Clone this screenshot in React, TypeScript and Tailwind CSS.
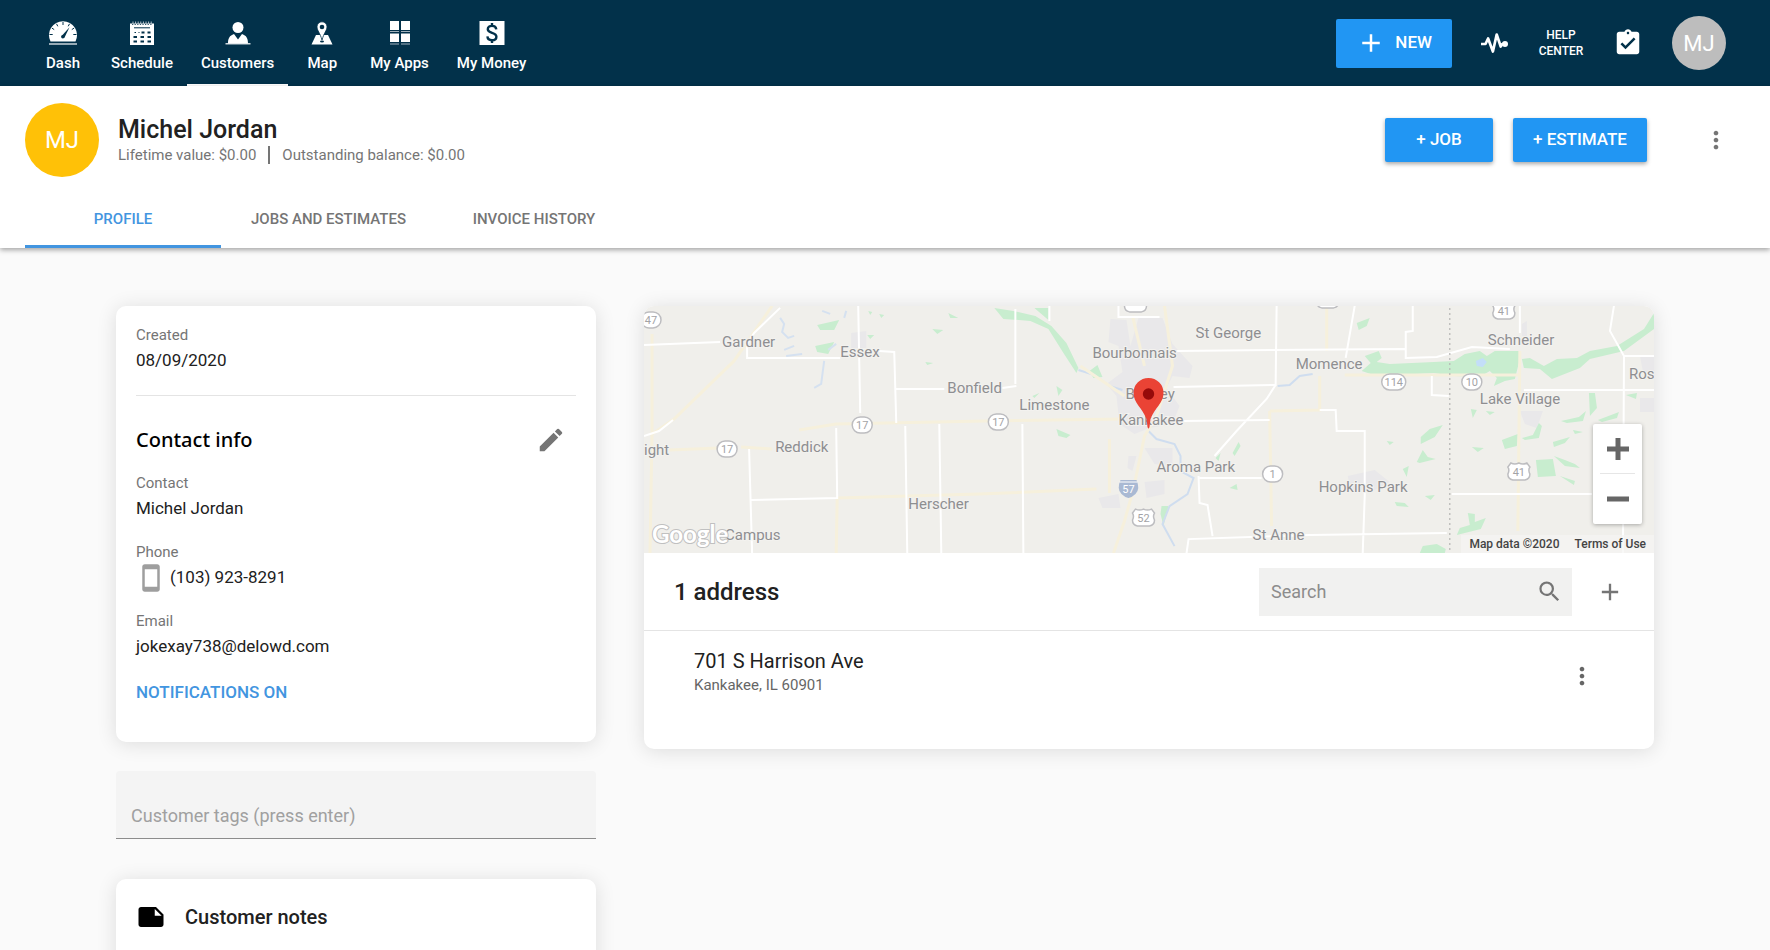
import type { ReactNode } from "react";
import {
  MdAdd,
  MdAssignmentTurnedIn,
  MdEdit,
  MdMoreVert,
  MdNote,
  MdSearch,
  MdStayCurrentPortrait,
} from "react-icons/md";

/* ===== Nav icons ===== */
const DashIcon = () => (
  <svg width="30" height="24" viewBox="0 0 30 24">
    <path d="M2.5 20.5A14 14 0 1 1 27.500 20.500Z" fill="#fff" />
    <path
      d="M15 1v3M8.500 2.800l1.300 2.500M21.500 2.800l-1.300 2.500M3.800 7l2.400 1.600M26.200 7l-2.400 1.600M1.500 13.500h3.200M28.500 13.500h-3.200"
      stroke="#02314a"
      strokeWidth="1"
    />
    <path d="M13.400 15.200L21.500 6.200L16.400 16.800Z" fill="#02314a" />
    <circle cx="14.800" cy="15.800" r="1.700" fill="#02314a" />
    <path d="M1 23h28" stroke="#fff" strokeWidth="1.200" />
  </svg>
);

const ScheduleIcon = () => (
  <svg width="26" height="24" viewBox="0 0 26 24">
    <path d="M1 2.500h24v21.500H1z" fill="#fff" />
    <path
      d="M4 0.500v2.500M6.600 0.500v2.500M9.200 0.500v2.500M11.800 0.500v2.500M14.400 0.500v2.500M17 0.500v2.500M19.600 0.500v2.500M22.200 0.500v2.500"
      stroke="#b9c6ce"
      strokeWidth="1"
    />
    <path d="M3 3.500h20" stroke="#02314a" strokeWidth="0.800" strokeDasharray="1.300 1.300" />
    <path d="M5 6.800h16" stroke="#02314a" strokeWidth="1" />
    <path
      d="M12.500 11.500h3M18.500 11.500h3M4.500 16h3.500M11.500 16h3.500M18.500 16h3.500M4.500 20.500h3.500M11.500 20.500h3.500M18.500 20.500h3.500"
      stroke="#02314a"
      strokeWidth="2.200"
    />
    <path d="M5.500 11.500h1.500M9.500 11.500h1" stroke="#02314a" strokeWidth="1" />
  </svg>
);

const CustomersIcon = () => (
  <svg width="26" height="24" viewBox="0 0 26 24">
    <circle cx="13" cy="6.500" r="5.500" fill="#fff" />
    <path d="M3 22.500c0-5 1.500-8 6-9.500l4 5.500 4-5.500c4.500 1.500 6 4.500 6 9.500z" fill="#fff" />
    <path d="M0.500 22.800h25" stroke="#fff" strokeWidth="1.200" />
  </svg>
);

const MapIcon = () => (
  <svg width="22" height="24" viewBox="0 0 22 24">
    <path d="M5 14h12l4.500 9.500h-21z" fill="#fff" />
    <path
      d="M11 0.800a5 5 0 0 0-5 5c0 3.600 3 6 5 13.200 2-7.200 5-9.600 5-13.200a5 5 0 0 0-5-5z"
      fill="#fff"
      stroke="#02314a"
      strokeWidth="0.800"
    />
    <circle cx="11" cy="6" r="2.300" fill="#02314a" />
    <ellipse cx="11" cy="20.500" rx="2" ry="0.900" fill="#02314a" />
  </svg>
);

const AppsIcon = () => (
  <svg width="22" height="24" viewBox="0 0 22 24">
    <path d="M1 0h9v9H1zM12 0h9v9h-9zM1 12.500h9v8.500H1zM12 12.500h9v8.500h-9z" fill="#fff" />
    <path d="M1 10.500h9M12 10.500h9M1 23h9M12 23h9" stroke="#9fb0bb" strokeWidth="1.200" />
  </svg>
);

const MoneyIcon = () => (
  <svg width="26" height="24" viewBox="0 0 26 24">
    <path d="M0.500 0h25v24h-25z" fill="#fff" />
    <path
      d="M17.300 8.300c-.3-2.200-1.900-3.400-4.300-3.400-2.500 0-4.200 1.200-4.200 3.300 0 4.600 8.600 2.600 8.600 7.500 0 2.200-1.800 3.500-4.400 3.500-2.700 0-4.400-1.400-4.600-3.800M13 2v3M13 19v3"
      fill="none"
      stroke="#02314a"
      strokeWidth="2.400"
    />
  </svg>
);

const PulseIcon = () => (
  <svg width="28" height="22" viewBox="0 0 28 22">
    <path
      d="M0 12h4.500l2.600-5.500 4.800 13 3.800-17 4 12 1.500-2.500h2"
      fill="none"
      stroke="#fff"
      strokeWidth="2.700"
      strokeLinejoin="round"
    />
    <circle cx="24" cy="12" r="3" fill="#fff" />
  </svg>
);

const navItems: { label: string; icon: ReactNode; active?: boolean }[] = [
  { label: "Dash", icon: <DashIcon /> },
  { label: "Schedule", icon: <ScheduleIcon /> },
  { label: "Customers", icon: <CustomersIcon />, active: true },
  { label: "Map", icon: <MapIcon /> },
  { label: "My Apps", icon: <AppsIcon /> },
  { label: "My Money", icon: <MoneyIcon /> },
];

/* ===== Map data ===== */
const places: [string, number, number][] = [
  ["Gardner", 78, 41],
  ["Essex", 196, 51],
  ["Bonfield", 303, 87],
  ["Reddick", 131, 146],
  ["Herscher", 264, 203],
  ["Campus", 81, 234],
  ["ight", 0, 149],
  ["Limestone", 375, 104],
  ["Bourbonnais", 448, 52],
  ["Bradley", 481, 93],
  ["Kankakee", 474, 119],
  ["St George", 551, 32],
  ["Aroma Park", 512, 166],
  ["St Anne", 608, 234],
  ["Momence", 651, 63],
  ["Hopkins Park", 674, 186],
  ["Schneider", 843, 39],
  ["Lake Village", 835, 98],
  ["Ros", 984, 73],
];

const routes: [string, number, number][] = [
  ["47", 7, 14],
  ["17", 83, 143],
  ["17", 218, 119],
  ["17", 354, 116],
  ["1", 628, 168],
  ["114", 749, 76],
  ["10", 827, 76],
];

const usRoutes: [string, number, number][] = [
  ["41", 859, 5],
  ["41", 874, 166],
  ["52", 499, 212],
  ["", 491, -2],
  ["", 683, -6],
];

const whiteRoads =
  "M0 39L76 36M136 2L110 27L103 38V52H196M214 0L216 107M235 45L250 46L252 117M252 83H300M29 114L15 125L0 130M105 143L108 247M107 194L193 192L192 122M261 120L263 247M295 118L297 247" +
  "M371 3V78M405 0V15M358 82L372 80M378 118L379 247M474 0V11H515M532 45L760 43M632 0L631 79L529 81M631 79L622 93L592 125L570 150M537 115L625 114M555 172H617M554 170L555 197L563 199L568 230M542 247L544 233L665 229L802 227M675 104H691L692 125H720V190L718 247" +
  "M710 0L701 52M768 0V25L761 26V52L792 51L827 41L865 43M875 0V27M969 0L965 25L979 50H1009M979 50L978 247M879 84H1009M787 70V89L804 90M807 188H947";

const yellowRoads =
  "M128 0L90 55L30 113L8 128L6 247M8 28V128M25 144L75 142M97 141L128 143M155 124L192 118L340 115L480 113M193 192L335 188L452 183M193 192L192 247M488 10L500 60M520 0L528 60L512 110L500 130L489 183L480 215L469 247M465 133V187M625 105L627 220M625 105L675 104V70M682 0V45M875 45L873 225M700 69H874M436 60L480 90";

const greens =
  "M350 2L369 5L391 10L407 20L422 37L434 62L432 67L419 47L404 23L386 15L359 13zM390 2H404V14zM445 65L453 59L458 71L449 72zM412 123L426 129L422 132L414 130z" +
  "M717 65L726 57L720 50L734 45L737 52L732 56L745 58L789 56L809 55L820 48L835 45L842 50L850 45L874 45L875 53L870 73L860 75L849 80L852 72L845 65L835 71L809 70L789 67L732 70z" +
  "M877 53L885 52L899 60L912 53L932 52L945 45L972 40L999 23L1009 7V23L979 45L945 53L935 62L907 73L895 63L879 62z" +
  "M173 19L195 14L190 24L176 24zM171 40L190 36L184 48L173 46zM304 7L314 12L306 12zM288 23L299 24L293 28zM223 29L230 29L226 33zM281 56L289 57L283 59zM235 8L240 9L237 12zM224 5L228 6L226 9z" +
  "M712 17L725 12L722 20L714 24zM776 131L785 123L798 119L790 131L776 138zM772 156L778 144L783 151L791 153L775 157zM750 196L760 197L764 201L752 200zM780 190L790 189L786 194zM758 163L764 160L762 171zM742 135L749 136L745 139z" +
  "M857 134L873 128L872 140L860 143zM877 132L888 129L894 117L897 120L894 132L880 134zM826 103L832 104L828 112zM841 105L850 106L845 109zM827 141L839 142L833 146zM916 115L934 111L941 105L938 115L922 117zM944 87L950 87L952 102L945 110zM953 114L974 106L972 112L957 116zM908 136L925 131L920 137L909 141zM928 124L938 126L930 128z" +
  "M891 154L908 153L911 170L893 171zM909 150L920 154L930 158L935 162L920 160zM915 170L930 175L929 179zM823 207L830 208L830 216L841 212L836 223L812 229L815 222L825 219zM778 240L792 238L801 243L800 247H775zM981 89L992 87L991 93zM588 147L594 136L596 140L590 150zM571 152L576 147L574 155zM585 182L592 178L593 184zM517 200L524 200L519 220L516 208zM412 80L418 84L414 90zM388 90L395 87L390 92z";

const CountyMap = () => (
  <svg
    className="block h-full w-full"
    viewBox="0 0 1009 247"
    preserveAspectRatio="xMidYMid slice"
    fontFamily="Roboto, sans-serif"
  >
    <path d="M0 0h1009v247H0z" fill="#f0efeb" />
    {/* towns */}
    <path
      d="M466 13L482 14L486 40L494 12H518L528 38L548 60L545 72L528 70L522 82L535 100L528 118L505 122L490 128L475 118L472 90L462 78L478 66L474 40L464 36zM500 142H528V160L510 158zM484 150H492L488 165L483 162zM500 176L520 174V188L502 192zM454 192L474 188L476 202L458 202zM875 105H898L892 122L880 118zM703 170L730 164L745 176L730 184H706zM995 50H1009V66H998zM995 92H1009V106H995zM877 18L882 15V30H877zM207 27L222 25V42H207z"
      fill="#e9e8ea"
    />
    <path d={greens} fill="#c8edcf" />
    {/* water */}
    <path
      d="M434 64L450 69L465 80L478 84M504 125L512 133L530 138L536 150V165L549 172L543 188L525 200L518 218L530 240M633 80L645 79L655 70L668 68"
      fill="none"
      stroke="#cfddef"
      strokeWidth="2"
    />
    <path
      d="M136 12L140 18L138 26L144 32L150 30M140 44L150 40M142 50L158 48M178 5L186 8M180 55L177 78L170 82M184 44L192 38M202 5L200 12"
      fill="none"
      stroke="#d5e1f0"
      strokeWidth="2"
    />
    <path d="M831 55L838 52L842 56L838 61L832 60z" fill="#c3def8" />
    {/* roads */}
    <path d={yellowRoads} fill="none" stroke="#f6f0dc" strokeWidth="3" />
    <path d={whiteRoads} fill="none" stroke="#fff" strokeWidth="2" />
    <path d="M805 2V247" stroke="#b5b5b3" strokeWidth="1.200" strokeDasharray="2 3" />

    {/* shields */}
    {routes.map(([name, x, y]) => {
      const half = name.length > 2 ? 12 : 10;
      return (
        <g key={`${name}-${x}`}>
          <rect x={x - half} y={y - 8} width={half * 2} height="16" rx="8" fill="#fff" stroke="#bdbdc0" strokeWidth="1.500" />
          <text x={x} y={y + 4} textAnchor="middle" fontSize="11" fill="#a3a3a6">{name}</text>
        </g>
      );
    })}
    {usRoutes.map(([name, x, y]) => (
      <g key={`${name}-${x}`}>
        <path
          d={`M${x - 8} ${y - 9}q4 2 8 0q4 2 8 0l3 4q-2 3 0 7q0 5 -5 6h-12q-5 -1 -5 -6q2 -4 0 -7z`}
          fill="#fff"
          stroke="#bdbdc0"
          strokeWidth="1.500"
        />
        <text x={x} y={y + 4} textAnchor="middle" fontSize="11" fill="#a3a3a6">{name}</text>
      </g>
    ))}
    <path d="M476 174h16q4 9 -1 14q-3 3 -7 4q-4 -1 -7 -4q-5 -5 -1 -14z" fill="#a9b9d3" />
    <path d="M475 176h18" stroke="#fff" strokeWidth="1" />
    <text x="484" y="187" textAnchor="middle" fontSize="11" fill="#fff">57</text>

    {/* place names */}
    {places.map(([name, x, y]) => (
      <text key={name} x={x} y={y} fontSize="15" fill="#8e8e91" stroke="#f3f2ef" strokeWidth="2" paintOrder="stroke">
        {name}
      </text>
    ))}
    <text
      x="8"
      y="237"
      fontSize="24"
      fontFamily="Lato, sans-serif"
      fontWeight="700"
      fill="#fff"
      stroke="#c0c0c0"
      strokeWidth="2"
      paintOrder="stroke"
    >
      Google
    </text>

    {/* pin */}
    <path d="M504 72a15 15 0 0 0-15 15c0 10 9 15 13 26l1 8q1 3 2 0l1-8c4-11 13-16 13-26a15 15 0 0 0-15-15z" fill="#ea4335" />
    <circle cx="504" cy="88" r="5.700" fill="#960a0a" />
  </svg>
);

const Field = ({ label, children }: { label: string; children: ReactNode }) => (
  <div>
    <dt className="text-[15px] leading-[25px] text-[#757575]">{label}</dt>
    <dd className="flex h-[26px] items-center text-[17px] text-[#212121]">{children}</dd>
  </div>
);

const App = () => {
  return (
    <div className="flex h-screen flex-col overflow-hidden bg-[#fafafa] font-[Roboto,sans-serif] text-[#212121]">
      {/* ===== Top bar ===== */}
      <header className="flex h-[86px] shrink-0 items-center justify-between bg-[#02314a] pl-[29px] pr-11 text-white">
        <nav className="flex h-full">
          {navItems.map((item) => (
            <a
              key={item.label}
              href="#"
              className={`flex min-w-[68px] flex-col items-center gap-2 border-b-2 px-3.5 pt-[21px] text-[15px] leading-5 font-medium ${
                item.active ? "border-white" : "border-transparent"
              }`}
            >
              {item.icon}
              {item.label}
            </a>
          ))}
        </nav>

        <div className="flex items-center gap-[29px]">
          <button className="flex h-[49px] items-center gap-[9px] rounded-xs bg-[#2196f3] px-5 text-[17px] font-medium">
            <MdAdd size={30} />
            NEW
          </button>
          <button aria-label="Activity">
            <PulseIcon />
          </button>
          <a href="#" className="w-[46px] text-center text-xs leading-4 font-medium">
            HELP CENTER
          </a>
          <button aria-label="Tasks">
            <MdAssignmentTurnedIn size={30} />
          </button>
          <button className="h-[54px] w-[54px] rounded-full bg-[#bdbdbd] text-[22px]">MJ</button>
        </div>
      </header>

      {/* ===== Customer header ===== */}
      <section className="relative shrink-0 bg-white shadow-[0_2px_5px_rgba(0,0,0,0.35)]">
        <div className="flex h-[108px] items-center justify-between pr-10 pl-[25px]">
          <div className="flex items-center gap-[19px]">
            <div className="flex h-[74px] w-[74px] items-center justify-center rounded-full bg-[#ffc107] text-2xl text-white">
              MJ
            </div>
            <div>
              <h1 className="text-[25px] leading-[30px] font-medium">Michel Jordan</h1>
              <p className="flex items-center text-[15px] leading-5 text-[#757575]">
                Lifetime value: $0.00
                <span className="mx-3 h-[18px] w-0.5 bg-[#757575]" />
                Outstanding balance: $0.00
              </p>
            </div>
          </div>
          <div className="flex items-center">
            <button className="h-11 w-[108px] rounded-xs bg-[#2196f3] text-[17px] font-medium text-white shadow-[0_2px_4px_rgba(0,0,0,0.35)]">
              + JOB
            </button>
            <button className="ml-5 h-11 w-[134px] rounded-xs bg-[#2196f3] text-[17px] font-medium text-white shadow-[0_2px_4px_rgba(0,0,0,0.35)]">
              + ESTIMATE
            </button>
            <button aria-label="More" className="ml-[55px] text-[#757575]">
              <MdMoreVert size={28} />
            </button>
          </div>
        </div>

        <div className="flex h-[54px] pl-[25px] text-[15px] font-medium text-[#757575]">
          <button className="min-w-[196px] border-b-3 border-[#4295e0] px-[30px] text-[#4295e0]">PROFILE</button>
          <button className="min-w-[196px] border-b-3 border-transparent px-[30px]">JOBS AND ESTIMATES</button>
          <button className="min-w-[196px] border-b-3 border-transparent px-[30px]">INVOICE HISTORY</button>
        </div>
      </section>

      {/* ===== Content ===== */}
      <main className="grid grid-cols-[480fr_1010fr] items-start gap-12 px-[116px] pt-[58px]">
        <div>
          <section className="rounded-[10px] bg-white px-5 pt-[17px] pb-[38px] shadow-[0_2px_20px_rgba(0,0,0,0.12)]">
            <dl>
              <Field label="Created">08/09/2020</Field>
            </dl>
            <hr className="mt-[21px] border-[#e4e4e4]" />
            <div className="mt-[29px] flex items-center justify-between pr-[10px]">
              <h2 className="font-['Noto_Sans',sans-serif] text-xl leading-[30px] font-medium text-black">Contact info</h2>
              <button aria-label="Edit contact info" className="text-[#757575]">
                <MdEdit size={30} />
              </button>
            </div>
            <dl className="mt-4 flex flex-col gap-[18px]">
              <Field label="Contact">Michel Jordan</Field>
              <Field label="Phone">
                <MdStayCurrentPortrait size={30} className="mr-1 text-[#9e9e9e]" />
                (103) 923-8291
              </Field>
              <Field label="Email">jokexay738@delowd.com</Field>
            </dl>
            <button className="mt-5 block text-[17px] leading-6 font-medium text-[#4295e0]">NOTIFICATIONS ON</button>
          </section>

          <input
            type="text"
            aria-label="Customer tags"
            placeholder="Customer tags (press enter)"
            className="mt-[29px] block h-[68px] w-full rounded-t-sm border-b border-[#8c8c8c] bg-[#f4f4f4] px-[15px] pt-[21px] text-lg outline-none placeholder:text-[#a0a0a0]"
          />

          <section className="mt-10 h-60 rounded-[10px] bg-white px-5 pt-[18px] shadow-[0_2px_20px_rgba(0,0,0,0.12)]">
            <div className="flex items-center gap-[19px]">
              <MdNote size={30} className="text-black" />
              <h2 className="text-xl leading-10 font-medium">Customer notes</h2>
            </div>
          </section>
        </div>

        {/* Addresses */}
        <section className="overflow-hidden rounded-[10px] bg-white shadow-[0_2px_20px_rgba(0,0,0,0.12)]">
          <div className="relative h-[247px]">
            <CountyMap />
            <div className="absolute right-3 bottom-[29px] flex w-[49px] flex-col rounded-xs bg-white px-[7px] shadow-[0_1px_4px_rgba(0,0,0,0.3)]">
              <button aria-label="Zoom in" className="flex h-[50px] items-center justify-center border-b border-[#e6e6e6]">
                <svg width="22" height="22" viewBox="0 0 22 22">
                  <path d="M0 11h22M11 0v22" stroke="#666" strokeWidth="5" />
                </svg>
              </button>
              <button aria-label="Zoom out" className="flex h-[50px] items-center justify-center">
                <svg width="22" height="22" viewBox="0 0 22 22">
                  <path d="M0 11h22" stroke="#666" strokeWidth="5" />
                </svg>
              </button>
            </div>
            <div className="absolute right-0 bottom-0 flex gap-[15px] bg-[#f5f5f3]/70 px-2 text-xs leading-[18px] font-medium text-[#444]">
              <span>Map data ©2020</span>
              <a href="#">Terms of Use</a>
            </div>
          </div>

          <div className="flex h-[78px] items-center border-b border-[#e4e4e4] pr-[30px] pl-[30px]">
            <h2 className="flex-1 text-2xl font-medium">1 address</h2>
            <label className="flex h-12 w-[313px] items-center bg-[#f1f1f0] pr-[9px] pl-3">
              <input
                type="text"
                aria-label="Search"
                placeholder="Search"
                className="min-w-0 flex-1 bg-transparent text-lg outline-none placeholder:text-[#8c8c8c]"
              />
              <MdSearch size={27} className="text-[#757575]" />
            </label>
            <button aria-label="Add address" className="ml-6 text-[#757575]">
              <MdAdd size={28} />
            </button>
          </div>

          <div className="flex items-start justify-between pt-4 pr-[58px] pb-[54px] pl-[50px]">
            <div>
              <p className="text-xl leading-7">701 S Harrison Ave</p>
              <p className="text-[15px] leading-5 text-[#666]">Kankakee, IL 60901</p>
            </div>
            <button aria-label="Address options" className="mt-[15px] text-[#666]">
              <MdMoreVert size={28} />
            </button>
          </div>
        </section>
      </main>
    </div>
  );
};

export default App;
